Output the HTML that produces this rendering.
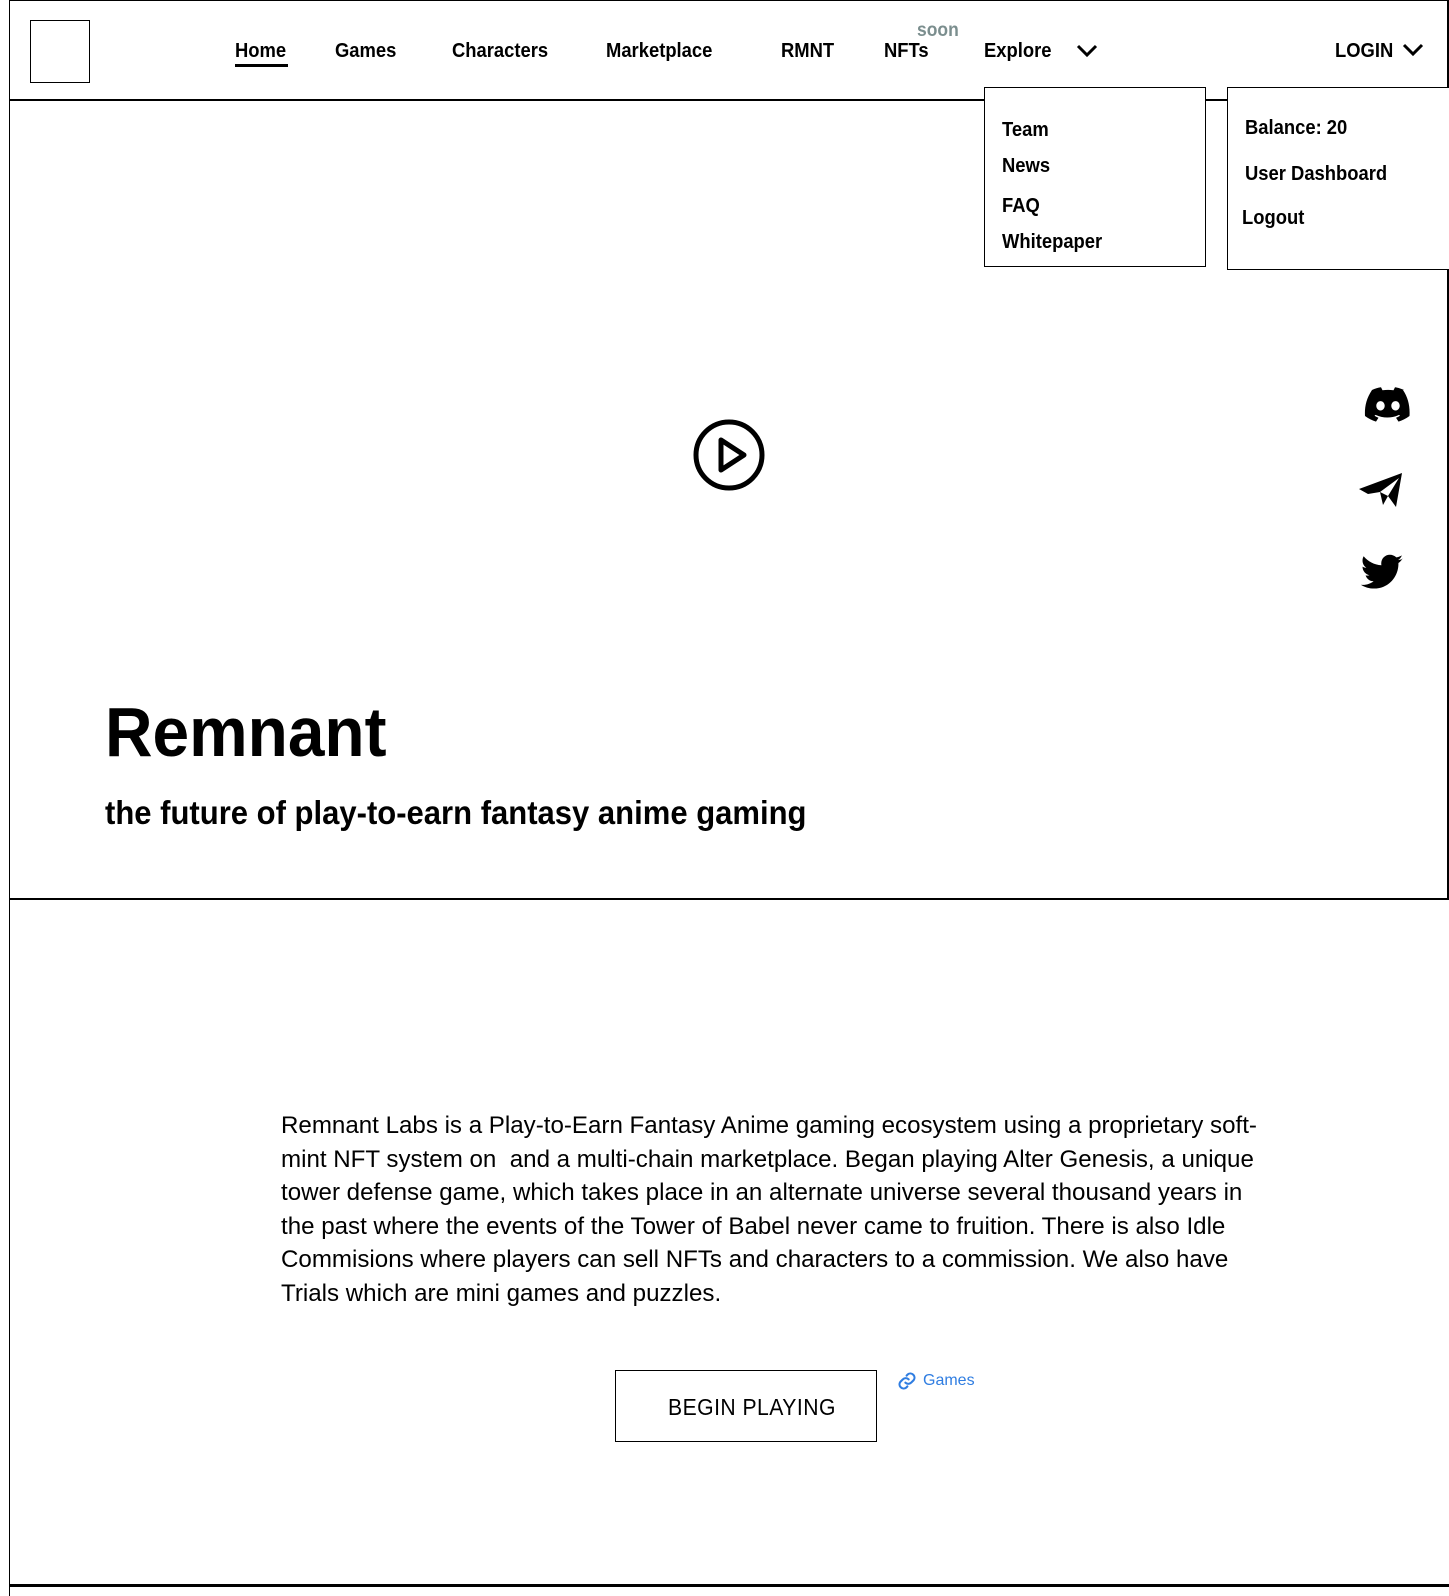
<!DOCTYPE html>
<html><head><meta charset="utf-8"><style>
*{margin:0;padding:0;box-sizing:border-box}
body{width:1449px;height:1596px;background:#fff;position:relative;overflow:hidden;font-family:"Liberation Sans",sans-serif;color:#000}
.a{position:absolute;white-space:nowrap}
.sx{display:inline-block;transform-origin:left center}
.nav{font-weight:bold;font-size:20px;top:40px}
.nav .sx{transform:scaleX(.92)}
.dd{position:absolute;border:1.5px solid #000;background:#fff}
.di{position:absolute;font-weight:bold;font-size:20px;white-space:nowrap}
.di span{display:inline-block;transform:scaleX(.92);transform-origin:left}
.p{left:281px;font-size:24px}
.p span{display:inline-block;transform:scaleX(1.005);transform-origin:left}
</style></head><body>
<div class="a" style="left:9px;top:0;width:1px;height:1596px;background:#000"></div>
<div class="a" style="left:9px;top:0;width:1440px;height:1px;background:#000"></div>
<div class="a" style="left:1447px;top:0;width:2px;height:900px;background:#000"></div>
<div class="a" style="left:9px;top:99px;width:1440px;height:2px;background:#000"></div>
<div class="a" style="left:9px;top:898px;width:1440px;height:2px;background:#000"></div>
<div class="a" style="left:9px;top:1584px;width:1440px;height:3px;background:#000"></div>
<div class="a" style="left:30px;top:20px;width:60px;height:63px;border:1.5px solid #000"></div>
<div class="a nav" style="left:235px"><span class="sx">Home</span></div>
<div class="a" style="left:235px;top:64px;width:53px;height:3px;background:#000"></div>
<div class="a nav" style="left:335px"><span class="sx">Games</span></div>
<div class="a nav" style="left:452px"><span class="sx">Characters</span></div>
<div class="a nav" style="left:606px"><span class="sx">Marketplace</span></div>
<div class="a nav" style="left:781px"><span class="sx">RMNT</span></div>
<div class="a nav" style="left:884px"><span class="sx">NFTs</span></div>
<div class="a" style="left:917px;top:20px;font-size:19px;font-weight:bold;color:#7b8e8e"><span class="sx" style="transform:scaleX(.92)">soon</span></div>
<div class="a nav" style="left:984px"><span class="sx">Explore</span></div>
<svg class="a" style="left:1076px;top:44px" width="22" height="14"><path d="M2 2 L11 11 L20 2" stroke="#000" stroke-width="3" fill="none"/></svg>
<div class="a nav" style="left:1335px"><span class="sx">LOGIN</span></div>
<svg class="a" style="left:1402px;top:43px" width="22" height="14"><path d="M2 2 L11 11 L20 2" stroke="#000" stroke-width="3" fill="none"/></svg>
<div class="dd" style="left:984px;top:87px;width:222px;height:180px"></div>
<div class="di" style="left:1002px;top:119px"><span>Team</span></div>
<div class="di" style="left:1002px;top:155px"><span>News</span></div>
<div class="di" style="left:1002px;top:195px"><span>FAQ</span></div>
<div class="di" style="left:1002px;top:231px"><span>Whitepaper</span></div>
<div class="dd" style="left:1227px;top:87px;width:224px;height:183px"></div>
<div class="di" style="left:1245px;top:117px"><span>Balance: 20</span></div>
<div class="di" style="left:1245px;top:163px"><span>User Dashboard</span></div>
<div class="di" style="left:1242px;top:207px"><span>Logout</span></div>
<svg class="a" style="left:692px;top:418px" width="74" height="74"><circle cx="37" cy="37" r="33" stroke="#000" stroke-width="5" fill="none"/><path d="M29 22 L52 37 L29 52 Z" stroke="#000" stroke-width="5" fill="none" stroke-linejoin="round"/></svg>
<svg class="a" style="left:1364px;top:387px" width="48" height="37" viewBox="0 0 48 37"><path d="M40 3C37 1.6 34 .8 31 .3l-1.5 3c-3.6-.5-7.3-.5-11 0L17 .3C14 .8 11 1.6 8 3 2 12 .5 20.5 1 29c3.7 2.8 7.3 4.5 11 5.6l2.5-3.9c-1.4-.5-2.7-1.2-4-2l1-.8c7.6 3.5 16 3.5 23.5 0l1 .8c-1.3.8-2.6 1.5-4 2l2.5 3.9c3.7-1.1 7.3-2.8 11-5.6.6-9.8-1.3-18.2-6.5-26zM16.5 23.5c-2.3 0-4.2-2.1-4.2-4.7s1.8-4.7 4.2-4.7 4.2 2.1 4.2 4.7-1.9 4.7-4.2 4.7zm15 0c-2.3 0-4.2-2.1-4.2-4.7s1.8-4.7 4.2-4.7 4.2 2.1 4.2 4.7-1.9 4.7-4.2 4.7z" fill="#000"/></svg>
<svg class="a" style="left:1358px;top:472px" width="46" height="36" viewBox="0 0 46 36"><path d="M1 17 L44 1 L38 35 L30 24 L41 6 L22 20 L10 22 Z" fill="#000"/><path d="M22 20 L30 24 L25 33 Z" fill="#000"/></svg>
<svg class="a" style="left:1359px;top:554px" width="46" height="42" viewBox="0 0 24 22"><path d="M23 2.5c-.8.4-1.7.6-2.6.7.9-.6 1.6-1.4 2-2.5-.9.5-1.9.9-2.900 1.1C18.6.9 17.4.4 16.1.4c-2.5 0-4.5 2-4.5 4.500 0 .4 0 .7.1 1C7.9 5.7 4.6 3.900 2.4 1.2 2 1.9 1.8 2.6 1.800 3.5c0 1.6.8 2.9 2 3.7-.7 0-1.4-.2-2-.6v.1c0 2.2 1.600 4 3.6 4.4-.4.1-.8.2-1.2.2-.3 0-.6 0-.8-.1.6 1.8 2.200 3.1 4.2 3.1-1.5 1.2-3.5 1.9-5.6 1.9-.4 0-.7 0-1.1-.1 2 1.300 4.4 2 6.9 2 8.3 0 12.8-6.900 12.8-12.8v-.6c.9-.6 1.6-1.400 2.2-2.3z" fill="#000"/></svg>
<div class="a" style="left:105px;top:692px;font-size:70px;font-weight:bold;line-height:80px"><span class="sx" style="transform:scaleX(.94)">Remnant</span></div>
<div class="a" style="left:105px;top:793px;font-size:33px;font-weight:bold;line-height:40px"><span class="sx" style="transform:scaleX(.94)">the future of play-to-earn fantasy anime gaming</span></div>
<div class="a p" style="top:1112px"><span>Remnant Labs is a Play-to-Earn Fantasy Anime gaming ecosystem using a proprietary soft-</span></div>
<div class="a p" style="top:1146px"><span>mint NFT system on&nbsp; and a multi-chain marketplace. Began playing Alter Genesis, a unique</span></div>
<div class="a p" style="top:1179px"><span>tower defense game, which takes place in an alternate universe several thousand years in</span></div>
<div class="a p" style="top:1213px"><span>the past where the events of the Tower of Babel never came to fruition. There is also Idle</span></div>
<div class="a p" style="top:1246px"><span>Commisions where players can sell NFTs and characters to a commission. We also have</span></div>
<div class="a p" style="top:1280px"><span>Trials which are mini games and puzzles.</span></div>
<div class="a" style="left:615px;top:1370px;width:262px;height:72px;border:1.5px solid #000"></div>
<div class="a" style="left:668px;top:1394px;font-size:23px;letter-spacing:.5px"><span class="sx" style="transform:scaleX(.92)">BEGIN PLAYING</span></div>
<svg class="a" style="left:897px;top:1371px" width="20" height="20" viewBox="0 0 24 24"><path d="M10 14a5 5 0 0 0 7 0l3-3a5 5 0 0 0-7-7l-1.5 1.5M14 10a5 5 0 0 0-7 0l-3 3a5 5 0 0 0 7 7l1.5-1.5" stroke="#2f7de1" stroke-width="2.5" fill="none" stroke-linecap="round"/></svg>
<div class="a" style="left:923px;top:1372px;font-size:16px;color:#2f7de1">Games</div>
</body></html>
